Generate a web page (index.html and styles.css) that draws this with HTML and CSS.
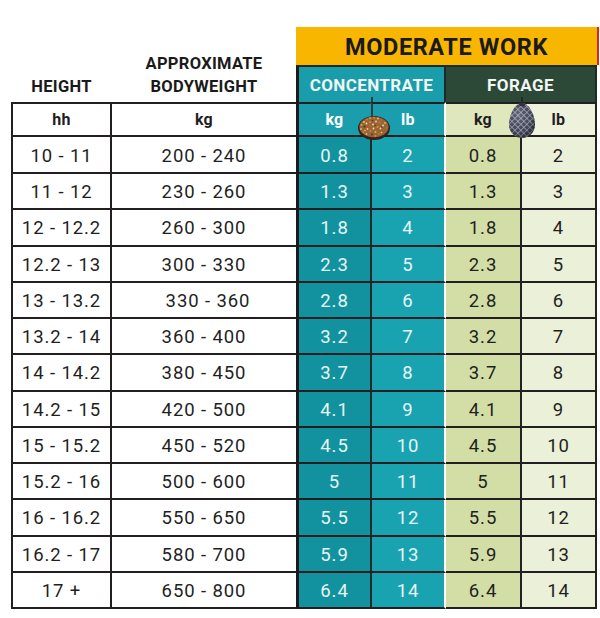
FILE: index.html
```html
<!DOCTYPE html>
<html lang="en">
<head>
<meta charset="utf-8">
<title>Moderate work feeding chart</title>
<link rel="stylesheet" href="styles.css">
</head>
<body>
<div class="chart">
  <div class="grid">
    <div class="lh col1">HEIGHT</div>
    <div class="lh col2">APPROXIMATE<br>BODYWEIGHT</div>
    <div class="work">MODERATE WORK</div>
    <div class="sub conc">CONCENTRATE</div>
    <div class="sub forage">FORAGE</div>

    <div class="cell c1 unit">hh</div><div class="cell c2 unit">kg</div><div class="cell ck unit">kg</div><div class="cell cl unit">lb</div><div class="cell fk unit">kg</div><div class="cell fl unit">lb</div>

    <div class="cell c1">10 - 11</div><div class="cell c2">200 - 240</div><div class="cell ck">0.8</div><div class="cell cl">2</div><div class="cell fk">0.8</div><div class="cell fl">2</div>
    <div class="cell c1">11 - 12</div><div class="cell c2">230 - 260</div><div class="cell ck">1.3</div><div class="cell cl">3</div><div class="cell fk">1.3</div><div class="cell fl">3</div>
    <div class="cell c1">12 - 12.2</div><div class="cell c2">260 - 300</div><div class="cell ck">1.8</div><div class="cell cl">4</div><div class="cell fk">1.8</div><div class="cell fl">4</div>
    <div class="cell c1">12.2 - 13</div><div class="cell c2">300 - 330</div><div class="cell ck">2.3</div><div class="cell cl">5</div><div class="cell fk">2.3</div><div class="cell fl">5</div>
    <div class="cell c1">13 - 13.2</div><div class="cell c2 nudge">330 - 360</div><div class="cell ck">2.8</div><div class="cell cl">6</div><div class="cell fk">2.8</div><div class="cell fl">6</div>
    <div class="cell c1">13.2 - 14</div><div class="cell c2">360 - 400</div><div class="cell ck">3.2</div><div class="cell cl">7</div><div class="cell fk">3.2</div><div class="cell fl">7</div>
    <div class="cell c1">14 - 14.2</div><div class="cell c2">380 - 450</div><div class="cell ck">3.7</div><div class="cell cl">8</div><div class="cell fk">3.7</div><div class="cell fl">8</div>
    <div class="cell c1">14.2 - 15</div><div class="cell c2">420 - 500</div><div class="cell ck">4.1</div><div class="cell cl">9</div><div class="cell fk">4.1</div><div class="cell fl">9</div>
    <div class="cell c1">15 - 15.2</div><div class="cell c2">450 - 520</div><div class="cell ck">4.5</div><div class="cell cl">10</div><div class="cell fk">4.5</div><div class="cell fl">10</div>
    <div class="cell c1">15.2 - 16</div><div class="cell c2">500 - 600</div><div class="cell ck">5</div><div class="cell cl">11</div><div class="cell fk">5</div><div class="cell fl">11</div>
    <div class="cell c1">16 - 16.2</div><div class="cell c2">550 - 650</div><div class="cell ck">5.5</div><div class="cell cl">12</div><div class="cell fk">5.5</div><div class="cell fl">12</div>
    <div class="cell c1">16.2 - 17</div><div class="cell c2">580 - 700</div><div class="cell ck">5.9</div><div class="cell cl">13</div><div class="cell fk">5.9</div><div class="cell fl">13</div>
    <div class="cell c1">17 +</div><div class="cell c2">650 - 800</div><div class="cell ck">6.4</div><div class="cell cl">14</div><div class="cell fk">6.4</div><div class="cell fl">14</div>
  </div>

  <svg class="bowl" width="36" height="44" viewBox="0 0 36 44" aria-hidden="true">
    <defs>
      <clipPath id="feedclip"><ellipse cx="18" cy="30" rx="14.6" ry="10.2"/></clipPath>
    </defs>
    <line x1="16" y1="0" x2="16" y2="19" stroke="#2a2a2a" stroke-width="1.6"/>
    <ellipse cx="18" cy="31" rx="16" ry="12" fill="#33231a"/>
    <ellipse cx="18" cy="30" rx="14.6" ry="10.2" fill="#9a6534"/>
    <g clip-path="url(#feedclip)">
      <circle cx="5.5" cy="28" r="1" fill="#d99a4e"/>
      <circle cx="8" cy="25" r="0.9" fill="#e9c47d"/>
      <circle cx="11" cy="22.5" r="1" fill="#c8763a"/>
      <circle cx="14" cy="21" r="0.8" fill="#f0d79c"/>
      <circle cx="18" cy="20.5" r="1" fill="#d4883f"/>
      <circle cx="22" cy="21.5" r="0.9" fill="#e8c27a"/>
      <circle cx="25.5" cy="23" r="1" fill="#b8682e"/>
      <circle cx="29" cy="26" r="0.9" fill="#e3b56c"/>
      <circle cx="5" cy="32" r="0.9" fill="#e5bb72"/>
      <circle cx="8.5" cy="29.5" r="1.1" fill="#5a3418"/>
      <circle cx="10.5" cy="26.5" r="0.9" fill="#f2dba4"/>
      <circle cx="14" cy="25" r="1.1" fill="#d08a45"/>
      <circle cx="16.5" cy="23.5" r="0.8" fill="#5b3519"/>
      <circle cx="20" cy="24.5" r="1" fill="#f0cf8e"/>
      <circle cx="23.5" cy="25.5" r="1" fill="#c87a36"/>
      <circle cx="27" cy="28.5" r="1" fill="#f1d69a"/>
      <circle cx="30.5" cy="31" r="0.8" fill="#c47331"/>
      <circle cx="7.5" cy="35" r="1" fill="#c9803b"/>
      <circle cx="11.5" cy="32" r="0.9" fill="#ecca88"/>
      <circle cx="13.5" cy="28.5" r="0.9" fill="#b66a2f"/>
      <circle cx="17" cy="27.5" r="1.1" fill="#e9be76"/>
      <circle cx="19.5" cy="28.5" r="0.8" fill="#603a1b"/>
      <circle cx="21.5" cy="30" r="1" fill="#d99347"/>
      <circle cx="24.5" cy="31.5" r="0.9" fill="#f0d398"/>
      <circle cx="28" cy="34" r="1" fill="#a85f2a"/>
      <circle cx="10.5" cy="37" r="0.9" fill="#e6bd73"/>
      <circle cx="14.5" cy="34" r="1" fill="#cf8640"/>
      <circle cx="17.5" cy="31.5" r="0.9" fill="#f3dda6"/>
      <circle cx="16" cy="37.5" r="1" fill="#5d371a"/>
      <circle cx="19.5" cy="35" r="1" fill="#e0ac62"/>
      <circle cx="23" cy="37" r="0.9" fill="#c57635"/>
      <circle cx="25.5" cy="35.5" r="0.8" fill="#efd194"/>
      <circle cx="19.5" cy="39" r="0.9" fill="#d48c43"/>
      <circle cx="26" cy="30" r="0.7" fill="#5a3418"/>
      <circle cx="9" cy="33.5" r="0.7" fill="#f0d79c"/>
    </g>
  </svg>

  <svg class="net" width="32" height="44" viewBox="0 0 32 44" aria-hidden="true">
    <defs>
      <pattern id="mesh" width="4.2" height="4.2" patternUnits="userSpaceOnUse" patternTransform="rotate(45)">
        <rect width="4.2" height="4.2" fill="#4a4f63"/>
        <path d="M0 0H4.2M0 0V4.2" stroke="#bfc2cf" stroke-width="1.2"/>
      </pattern>
      <radialGradient id="shade" cx="0.38" cy="0.35" r="0.75">
        <stop offset="0" stop-color="#ffffff" stop-opacity="0.15"/>
        <stop offset="0.6" stop-color="#000000" stop-opacity="0.08"/>
        <stop offset="1" stop-color="#000000" stop-opacity="0.55"/>
      </radialGradient>
    </defs>
    <line x1="16" y1="0" x2="16" y2="7" stroke="#222" stroke-width="1.5"/>
    <path d="M16 6 C8.5 6 3 19 3 27.5 C3 35.5 9 41 16 41 C23 41 29 35.5 29 27.5 C29 19 23.5 6 16 6Z" fill="url(#mesh)"/>
    <path d="M16 6 C8.5 6 3 19 3 27.5 C3 35.5 9 41 16 41 C23 41 29 35.5 29 27.5 C29 19 23.5 6 16 6Z" fill="url(#shade)"/>
    <ellipse cx="16" cy="7.5" rx="3" ry="1.8" fill="#2c3040"/>
  </svg>
</div>
</body>
</html>
```

FILE: styles.css
```css
html, body {
  margin: 0;
  padding: 0;
  background: #ffffff;
}

.chart {
  position: relative;
  width: 600px;
  height: 618px;
  box-sizing: border-box;
  padding: 27px 0 0 11px;
  font-family: Roboto, "Liberation Sans", sans-serif;
  color: #1f1f1f;
}

.grid {
  display: grid;
  grid-template-columns: 101px 184px 76px 74px 76px 75px;
  grid-template-rows: 38px 37px 35px 37px repeat(12, 36.25px);
}

.lh {
  grid-row: 1 / 3;
  display: flex;
  flex-direction: column;
  justify-content: flex-end;
  align-items: center;
  text-align: center;
  font-weight: 700;
  font-size: 16.5px;
  line-height: 23px;
  letter-spacing: 0.3px;
  padding-bottom: 4px;
  color: #1a1a1a;
}
.lh.col1 { grid-column: 1; }
.lh.col2 { grid-column: 2; }

.work {
  grid-column: 3 / 7;
  grid-row: 1;
  background: #f9b600;
  box-shadow: 2px 0 0 #d9262b;
  display: flex;
  align-items: center;
  justify-content: center;
  font-weight: 700;
  font-size: 23.5px;
  letter-spacing: 0.6px;
  padding-top: 2px;
  box-sizing: border-box;
  color: #1a1a1a;
}

.sub {
  grid-row: 2;
  box-sizing: border-box;
  border-top: 2px solid #1c2a2a;
  border-right: 2px solid #1c2a2a;
  display: flex;
  align-items: center;
  justify-content: center;
  font-weight: 700;
  font-size: 17px;
  letter-spacing: 0.4px;
  color: #f2f6f4;
}
.sub.conc {
  grid-column: 3 / 5;
  background: #1a9dab;
  border-left: 3px solid #1a1a1a;
}
.sub.forage {
  grid-column: 5 / 7;
  background: #2c4937;
}

.cell {
  box-sizing: border-box;
  border-bottom: 2px solid #231f20;
  display: flex;
  align-items: center;
  justify-content: center;
  padding-top: 2px;
  font-size: 18.5px;
  font-weight: 400;
  letter-spacing: 0.9px;
  white-space: nowrap;
}

.unit {
  border-top: 2px solid #231f20;
  padding-top: 0;
  font-weight: 700;
  font-size: 16px;
  letter-spacing: 0.3px;
}

.c1 {
  border-left: 2px solid #231f20;
  border-right: 2px solid #231f20;
}
.nudge { padding-left: 8px; }

.ck {
  border-left: 3px solid #1a1a1a;
  border-right: 2px solid #1d2b2c;
  background: #12929e;
  color: #e6f5f6;
}
.cl {
  border-right: 2px solid #ffffff;
  background: #19a3b1;
  color: #e6f5f6;
}
.fk {
  border-right: 2px solid #222222;
  background: #d2dea6;
  color: #1f1f1f;
}
.fl {
  border-right: 2px solid #222222;
  background: #ebf0d8;
  color: #1f1f1f;
}

.ck.unit, .cl.unit {
  background: #1a9ead;
  color: #ffffff;
}
.ck.unit { border-right-color: transparent; }
.fk.unit {
  background: #dfe7bc;
  border-right-color: transparent;
}
.fl.unit { background: #eef2dc; }

.bowl {
  position: absolute;
  left: 356px;
  top: 97px;
}
.net {
  position: absolute;
  left: 506px;
  top: 97px;
}
```
